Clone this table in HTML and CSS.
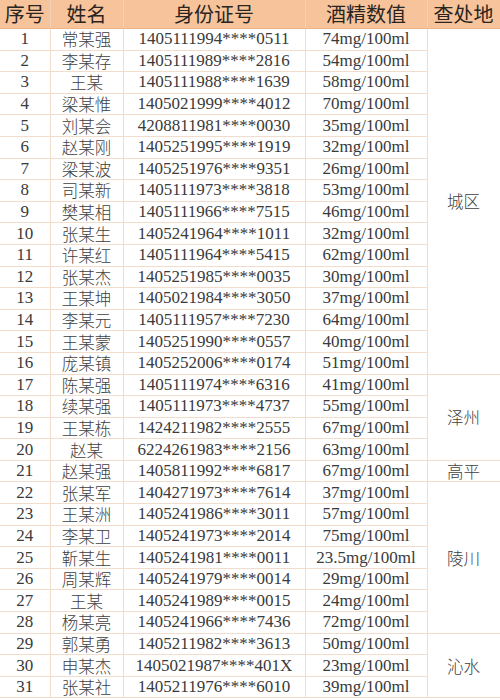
FILE: index.html
```html
<!DOCTYPE html>
<html lang="zh">
<head>
<meta charset="utf-8">
<link rel="stylesheet" href="styles.css">
</head>
<body>
<table class="sheet">
<colgroup><col class="c1"><col class="c2"><col class="c3"><col class="c4"><col class="c5"></colgroup>
<thead>
<tr><th>序号</th><th>姓名</th><th>身份证号</th><th>酒精数值</th><th>查处地</th></tr>
</thead>
<tbody>
<tr><td>1</td><td class="zh">常某强</td><td>1405111994****0511</td><td>74mg/100ml</td><td class="zh loc" rowspan="16">城区</td></tr>
<tr><td>2</td><td class="zh">李某存</td><td>1405111989****2816</td><td>54mg/100ml</td></tr>
<tr><td>3</td><td class="zh">王某</td><td>1405111988****1639</td><td>58mg/100ml</td></tr>
<tr><td>4</td><td class="zh">梁某惟</td><td>1405021999****4012</td><td>70mg/100ml</td></tr>
<tr><td>5</td><td class="zh">刘某会</td><td>4208811981****0030</td><td>35mg/100ml</td></tr>
<tr><td>6</td><td class="zh">赵某刚</td><td>1405251995****1919</td><td>32mg/100ml</td></tr>
<tr><td>7</td><td class="zh">梁某波</td><td>1405251976****9351</td><td>26mg/100ml</td></tr>
<tr><td>8</td><td class="zh">司某新</td><td>1405111973****3818</td><td>53mg/100ml</td></tr>
<tr><td>9</td><td class="zh">樊某相</td><td>1405111966****7515</td><td>46mg/100ml</td></tr>
<tr><td>10</td><td class="zh">张某生</td><td>1405241964****1011</td><td>32mg/100ml</td></tr>
<tr><td>11</td><td class="zh">许某红</td><td>1405111964****5415</td><td>62mg/100ml</td></tr>
<tr><td>12</td><td class="zh">张某杰</td><td>1405251985****0035</td><td>30mg/100ml</td></tr>
<tr><td>13</td><td class="zh">王某坤</td><td>1405021984****3050</td><td>37mg/100ml</td></tr>
<tr><td>14</td><td class="zh">李某元</td><td>1405111957****7230</td><td>64mg/100ml</td></tr>
<tr><td>15</td><td class="zh">王某蒙</td><td>1405251990****0557</td><td>40mg/100ml</td></tr>
<tr><td>16</td><td class="zh">庞某镇</td><td>1405252006****0174</td><td>51mg/100ml</td></tr>
<tr><td>17</td><td class="zh">陈某强</td><td>1405111974****6316</td><td>41mg/100ml</td><td class="zh loc" rowspan="4">泽州</td></tr>
<tr><td>18</td><td class="zh">续某强</td><td>1405111973****4737</td><td>55mg/100ml</td></tr>
<tr><td>19</td><td class="zh">王某栋</td><td>1424211982****2555</td><td>67mg/100ml</td></tr>
<tr><td>20</td><td class="zh">赵某</td><td>6224261983****2156</td><td>63mg/100ml</td></tr>
<tr><td>21</td><td class="zh">赵某强</td><td>1405811992****6817</td><td>67mg/100ml</td><td class="zh loc">高平</td></tr>
<tr><td>22</td><td class="zh">张某军</td><td>1404271973****7614</td><td>37mg/100ml</td><td class="zh loc" rowspan="7">陵川</td></tr>
<tr><td>23</td><td class="zh">王某洲</td><td>1405241986****3011</td><td>57mg/100ml</td></tr>
<tr><td>24</td><td class="zh">李某卫</td><td>1405241973****2014</td><td>75mg/100ml</td></tr>
<tr><td>25</td><td class="zh">靳某生</td><td>1405241981****0011</td><td>23.5mg/100ml</td></tr>
<tr><td>26</td><td class="zh">周某辉</td><td>1405241979****0014</td><td>29mg/100ml</td></tr>
<tr><td>27</td><td class="zh">王某</td><td>1405241989****0015</td><td>24mg/100ml</td></tr>
<tr><td>28</td><td class="zh">杨某亮</td><td>1405241966****7436</td><td>72mg/100ml</td></tr>
<tr><td>29</td><td class="zh">郭某勇</td><td>1405211982****3613</td><td>50mg/100ml</td><td class="zh loc" rowspan="3">沁水</td></tr>
<tr><td>30</td><td class="zh">申某杰</td><td>1405021987****401X</td><td>23mg/100ml</td></tr>
<tr><td>31</td><td class="zh">张某社</td><td>1405211976****6010</td><td>39mg/100ml</td></tr>
</tbody>
</table>
</body>
</html>
```
FILE: styles.css
```css
html, body {
  margin: 0;
  padding: 0;
  background: #ffffff;
}
.sheet {
  border-collapse: collapse;
  table-layout: fixed;
  width: 500px;
  color: #3a3a3a;
  font-family: "Liberation Serif", "Noto Sans CJK SC", serif;
}
.c1 { width: 50px; }
.c2 { width: 73px; }
.c3 { width: 182px; }
.c4 { width: 122px; }
.c5 { width: 73px; }
.sheet th {
  height: 28px;
  padding: 0;
  background: #f6c39b;
  color: #2a2420;
  font-family: "Noto Sans CJK SC", sans-serif;
  font-weight: 400;
  font-size: 20px;
  line-height: 28px;
  border-right: 1px solid #f0d2ba;
  border-bottom: 1px solid #eeb48a;
}
.sheet td {
  height: 20.6px;
  padding: 0;
  text-align: center;
  font-size: 17px;
  line-height: 20px;
  border: 1px solid #f2dccb;
  white-space: nowrap;
}
.sheet td:first-child, .sheet th:first-child { border-left: none; }
.sheet td.zh {
  font-family: "Noto Sans CJK SC", sans-serif;
  font-weight: 300;
  font-size: 16.5px;
  line-height: 20px;
  color: #404040;
}
.sheet td.loc {
  vertical-align: middle;
}
```
